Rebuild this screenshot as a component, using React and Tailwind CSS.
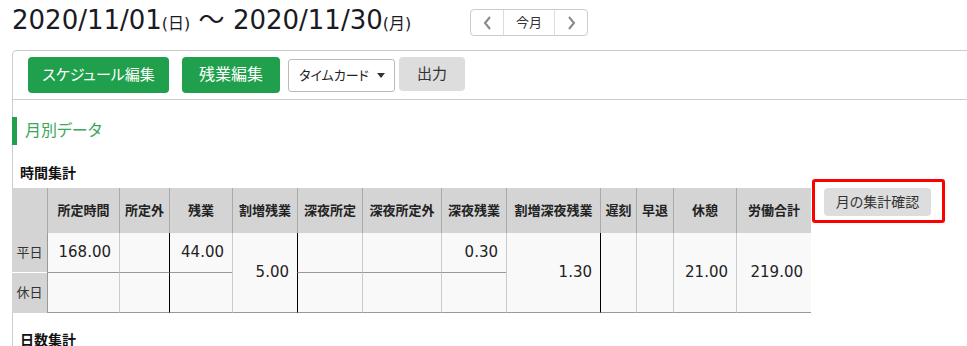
import React from 'react'

const headers = ['所定時間', '所定外', '残業', '割増残業', '深夜所定', '深夜所定外', '深夜残業', '割増深夜残業', '遅刻', '早退', '休憩', '労働合計']

function Chevron({ dir }) {
  return (
    <svg width="9" height="14" viewBox="0 0 9 14" fill="none">
      {dir === 'left' ? (
        <polyline points="7,1 2,7 7,13" stroke="#888" strokeWidth="2" />
      ) : (
        <polyline points="2,1 7,7 2,13" stroke="#888" strokeWidth="2" />
      )}
    </svg>
  )
}

function App() {
  const body = 'bg-[#f9f9f9] flex items-center justify-end pr-[8px] text-[15px] text-[#222]'

  return (
    <div className="w-[967px] h-[346px] overflow-hidden bg-white text-[#222] font-['DejaVu_Sans','Noto_Sans_CJK_JP',sans-serif] [font-feature-settings:'palt']">
      {/* period header */}
      <div className="flex h-[50px]">
        <div className="w-[470px] pl-[12px] pt-[5px] leading-[30px] text-[26px] text-[#1a1a24] whitespace-nowrap">
          2020/11/01<span className="text-[16px]">(日)</span> ～ 2020/11/30<span className="text-[16px]">(月)</span>
        </div>
        <div className="mt-[9px] flex h-[27px] w-[118px] border border-[#ccc] rounded-[4px] text-[13px] text-[#333]">
          <button className="w-[32px] flex items-center justify-center"><Chevron dir="left" /></button>
          <button className="w-[52px] border-x border-[#ddd] flex items-center justify-center">今月</button>
          <button className="flex-1 flex items-center justify-center"><Chevron dir="right" /></button>
        </div>
      </div>

      <div className="ml-[12px] border-l border-t border-[#ccc] rounded-tl-[5px]">
        {/* toolbar */}
        <div className="h-[49px] border-b border-[#ccc] flex items-start pt-[6px] pl-[15px]">
          <button className="w-[141px] h-[36px] rounded-[4px] bg-[#20a04c] text-white text-[15px]">スケジュール編集</button>
          <button className="ml-[13px] w-[98px] h-[36px] rounded-[4px] bg-[#20a04c] text-white text-[16px]">残業編集</button>
          <div className="ml-[8px] mt-[2px] w-[107px] h-[33px] border border-[#bbb] rounded-[3px] bg-white flex items-center pl-[10px] pr-[9px] text-[13px] text-[#222]">
            <span className="flex-1">タイムカード</span>
            <svg width="8" height="5" viewBox="0 0 8 5"><polygon points="0,0 8,0 4,5" fill="#333" /></svg>
          </div>
          <button className="ml-[4px] w-[66px] h-[34px] rounded-[4px] bg-[#ddd] text-[#333] text-[15px]">出力</button>
        </div>

        {/* monthly data */}
        <div className="pt-[17px]">
          <div className="-ml-px h-[28px] border-l-[5px] border-[#20a04c] pl-[8px] flex items-center text-[16px] text-[#3aa65c]">月別データ</div>

          <div className="mt-[18px] pl-[7px] h-[20px] leading-[20px] text-[14px] font-bold text-[#111]">時間集計</div>

          <div className="mt-[5px] flex items-start">
            <div className="-ml-px grid grid-cols-[35px_72px_50px_63px_65px_65px_79px_65px_94px_36px_37px_63px_75px] grid-rows-[45px_40px_40px] text-[13px]">
              <div className="bg-[#d4d4d4]" />
              {headers.map((h) => (
                <div key={h} className="bg-[#d4d4d4] border-l border-[#aaa] flex items-center justify-center font-bold text-[#222] whitespace-nowrap">{h}</div>
              ))}

              {/* row 1 */}
              <div className="bg-[#d4d4d4] border-b border-white flex items-center justify-center text-[#333]">平日</div>
              <div className={`${body} border-l border-b border-l-[#999] border-b-[#999]`}>168.00</div>
              <div className={`${body} border-l border-b border-l-[#ccc] border-b-[#999]`}></div>
              <div className={`${body} border-l border-b border-l-black border-b-[#999]`}>44.00</div>
              <div className={`${body} row-span-2 border-l border-b border-l-[#ccc] border-b-[#999]`}>5.00</div>
              <div className={`${body} border-l border-b border-l-black border-b-[#999]`}></div>
              <div className={`${body} border-l border-b border-l-[#ccc] border-b-[#999]`}></div>
              <div className={`${body} border-l border-b border-l-[#ccc] border-b-[#999]`}>0.30</div>
              <div className={`${body} row-span-2 border-l border-b border-l-[#ccc] border-b-[#999]`}>1.30</div>
              <div className={`${body} row-span-2 border-l border-b border-l-black border-b-[#999]`}></div>
              <div className={`${body} row-span-2 border-l border-b border-l-[#ccc] border-b-[#999]`}></div>
              <div className={`${body} row-span-2 border-l border-b border-l-[#ccc] border-b-[#999]`}>21.00</div>
              <div className={`${body} row-span-2 border-l border-b border-l-[#ccc] border-b-[#999]`}>219.00</div>

              {/* row 2 */}
              <div className="bg-[#d4d4d4] flex items-center justify-center text-[#333]">休日</div>
              <div className={`${body} border-l border-b border-l-[#999] border-b-[#999]`}></div>
              <div className={`${body} border-l border-b border-l-[#ccc] border-b-[#999]`}></div>
              <div className={`${body} border-l border-b border-l-black border-b-[#999]`}></div>
              <div className={`${body} border-l border-b border-l-black border-b-[#999]`}></div>
              <div className={`${body} border-l border-b border-l-[#ccc] border-b-[#999]`}></div>
              <div className={`${body} border-l border-b border-l-[#ccc] border-b-[#999]`}></div>
            </div>

            <div className="relative ml-[13px]">
              <button className="w-[107px] h-[28px] rounded-[4px] bg-[#ddd] text-[14px] text-[#333]">月の集計確認</button>
              <div className="absolute -left-[12px] -top-[9px] -right-[14px] -bottom-[7px] border-[3px] border-[#f00] rounded-[3px] pointer-events-none" />
            </div>
          </div>

          <div className="mt-[17px] pl-[7px] h-[20px] leading-[20px] text-[14px] font-bold text-[#111]">日数集計</div>
        </div>
      </div>
    </div>
  )
}

export default App
